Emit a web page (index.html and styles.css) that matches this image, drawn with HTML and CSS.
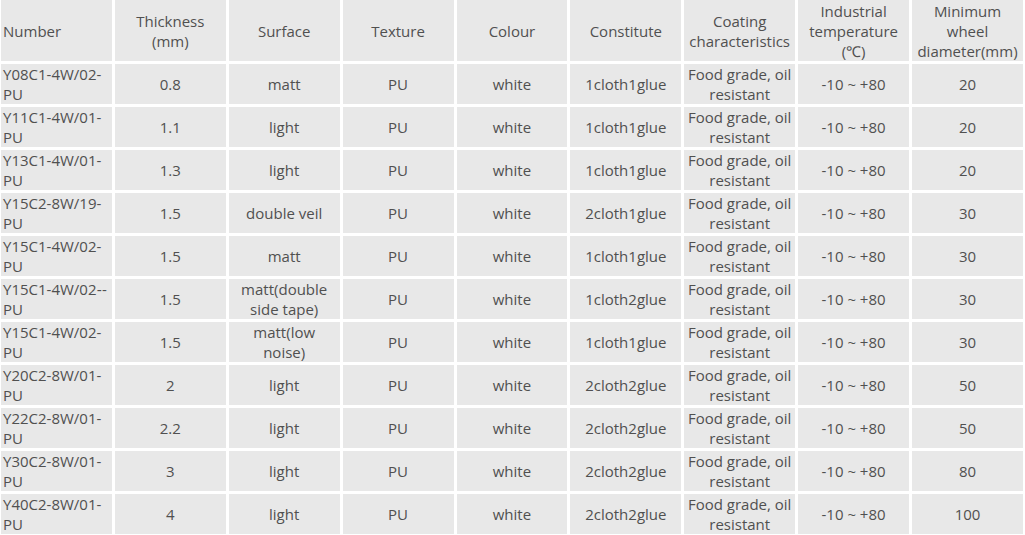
FILE: index.html
```html
<!DOCTYPE html>
<html>
<head>
<meta charset="utf-8">
<link rel="stylesheet" href="styles.css">
</head>
<body>
<table class="spec">
<thead>
<tr class="head">
<th class="num">Number</th><th>Thickness<br>(mm)</th><th>Surface</th><th>Texture</th><th>Colour</th><th>Constitute</th><th>Coating characteristics</th><th>Industrial temperature (℃)</th><th>Minimum wheel diameter(mm)</th>
</tr>
</thead>
<tbody>
<tr><td class="num">Y08C1-4W/02-PU</td><td>0.8</td><td>matt</td><td>PU</td><td>white</td><td>1cloth1glue</td><td>Food grade, oil resistant</td><td>-10 ~ +80</td><td>20</td></tr>
<tr><td class="num">Y11C1-4W/01-PU</td><td>1.1</td><td>light</td><td>PU</td><td>white</td><td>1cloth1glue</td><td>Food grade, oil resistant</td><td>-10 ~ +80</td><td>20</td></tr>
<tr><td class="num">Y13C1-4W/01-PU</td><td>1.3</td><td>light</td><td>PU</td><td>white</td><td>1cloth1glue</td><td>Food grade, oil resistant</td><td>-10 ~ +80</td><td>20</td></tr>
<tr><td class="num">Y15C2-8W/19-PU</td><td>1.5</td><td>double veil</td><td>PU</td><td>white</td><td>2cloth1glue</td><td>Food grade, oil resistant</td><td>-10 ~ +80</td><td>30</td></tr>
<tr><td class="num">Y15C1-4W/02-PU</td><td>1.5</td><td>matt</td><td>PU</td><td>white</td><td>1cloth1glue</td><td>Food grade, oil resistant</td><td>-10 ~ +80</td><td>30</td></tr>
<tr><td class="num">Y15C1-4W/02&#8209;-PU</td><td>1.5</td><td>matt(double side tape)</td><td>PU</td><td>white</td><td>1cloth2glue</td><td>Food grade, oil resistant</td><td>-10 ~ +80</td><td>30</td></tr>
<tr><td class="num">Y15C1-4W/02-PU</td><td>1.5</td><td>matt(low noise)</td><td>PU</td><td>white</td><td>1cloth1glue</td><td>Food grade, oil resistant</td><td>-10 ~ +80</td><td>30</td></tr>
<tr><td class="num">Y20C2-8W/01-PU</td><td>2</td><td>light</td><td>PU</td><td>white</td><td>2cloth2glue</td><td>Food grade, oil resistant</td><td>-10 ~ +80</td><td>50</td></tr>
<tr><td class="num">Y22C2-8W/01-PU</td><td>2.2</td><td>light</td><td>PU</td><td>white</td><td>2cloth2glue</td><td>Food grade, oil resistant</td><td>-10 ~ +80</td><td>50</td></tr>
<tr><td class="num">Y30C2-8W/01-PU</td><td>3</td><td>light</td><td>PU</td><td>white</td><td>2cloth2glue</td><td>Food grade, oil resistant</td><td>-10 ~ +80</td><td>80</td></tr>
<tr><td class="num">Y40C2-8W/01-PU</td><td>4</td><td>light</td><td>PU</td><td>white</td><td>2cloth2glue</td><td>Food grade, oil resistant</td><td>-10 ~ +80</td><td>100</td></tr>
</tbody>
</table>
</body>
</html>
```
FILE: styles.css
```css
html, body {
  margin: 0;
  padding: 0;
  background: #ffffff;
}
.spec {
  width: 1028px;
  margin: -3px 0 0 -2px;
  border-collapse: separate;
  border-spacing: 3px;
  table-layout: fixed;
  font-family: "Open Sans", Lato, sans-serif;
  font-size: 15px;
  line-height: 20px;
  color: #505050;
}
.spec th, .spec td {
  background: #e8e8e8;
  text-align: center;
  vertical-align: middle;
  padding: 0 3px;
  font-weight: normal;
  word-wrap: break-word;
}
.spec .head th {
  height: 61px;
}
.spec td {
  height: 40px;
}
.spec .num {
  text-align: left;
  padding: 0 1px 0 2px;
}
```
